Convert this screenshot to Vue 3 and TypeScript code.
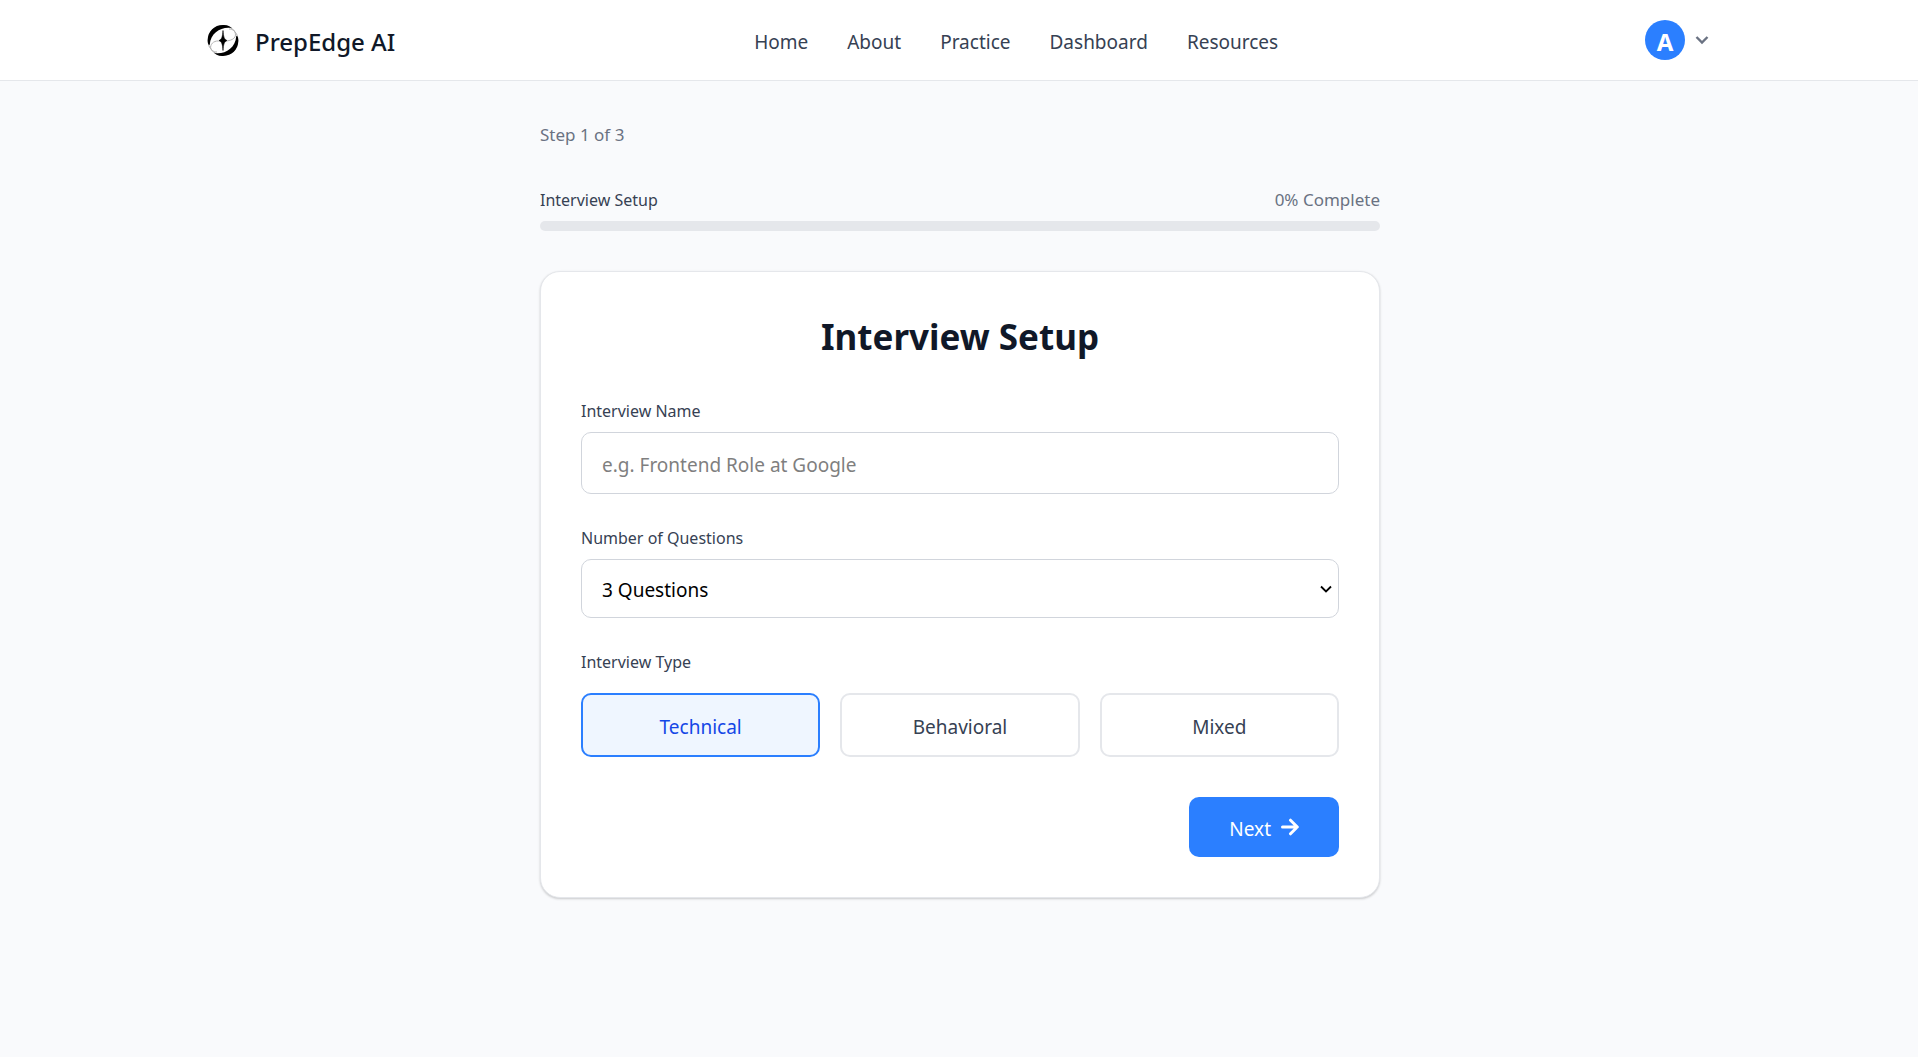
<script setup lang="ts">
import { ref } from 'vue'

const links: string[] = ['Home', 'About', 'Practice', 'Dashboard', 'Resources']
const interviewTypes: string[] = ['Technical', 'Behavioral', 'Mixed']
const questionCounts: number[] = [3, 5, 10]

const progress = ref<number>(0)
const interviewName = ref<string>('')
const questionCount = ref<number>(3)
const selectedType = ref<string>('Technical')
</script>

<template>
  <div class="page">
    <header class="topbar">
      <div class="topbar-inner">
        <a class="brand" href="#">
          <svg class="brand-mark" viewBox="0 -1 32 34" aria-hidden="true">
            <circle cx="16" cy="16.500" r="15" fill="#fff" stroke="#a8a8a8" stroke-width="1" />
            <g transform="translate(0 .5)">
              <path d="M1 19C-1 8 7 0 17 .6c4 .2 6 1.400 8 3C15 1.500 3.500 8 2.800 20c-.6 1-1.400 0-1.800-1Z" fill="#000" />
              <path d="M31 13c2 11-6 19-16 18.400-4-.2-6-1.400-8-3C17 30.500 28.500 24 29.200 12c.6-1 1.400 0 1.800 1Z" fill="#000" />
              <path d="M3.500 23C4 18 8 16 13 16.500c7 .5 15-.5 15.500-6C28.600 7 26 4.500 22 4.500M3.500 22c0 3.500 3 5.500 6.500 5.500" fill="none" stroke="#b5b5b5" stroke-width="1" />
              <path d="M16 6c.4 6 1.200 9 4 10-2.800 1-3.600 4-4 10-.4-6-1.200-9-4-10 2.800-1 3.600-4 4-10Z" fill="#000" stroke="#000" stroke-width=".6" />
            </g>
          </svg>
          <span class="brand-name">PrepEdge AI</span>
        </a>
        <nav class="links" aria-label="Main">
          <a v-for="link in links" :key="link" href="#">{{ link }}</a>
        </nav>
        <button class="account" type="button" aria-label="Account menu">
          <span class="avatar">A</span>
          <svg class="chevron" viewBox="0 0 14 10" aria-hidden="true">
            <path d="M1.500 2 7 7.500 12.500 2" fill="none" stroke="#6a7282" stroke-width="2.400" />
          </svg>
        </button>
      </div>
    </header>

    <main class="content">
      <p class="step">Step 1 of 3</p>
      <div class="progress-head">
        <span class="progress-title">Interview Setup</span>
        <span class="progress-value">{{ progress }}% Complete</span>
      </div>
      <div class="track" role="progressbar" :aria-valuenow="progress" aria-label="Interview Setup">
        <div class="fill" :style="{ width: progress + '%' }"></div>
      </div>

      <form class="card" @submit.prevent>
        <h1>Interview Setup</h1>
        <div class="field">
          <label for="interview-name">Interview Name</label>
          <input id="interview-name" v-model="interviewName" type="text" placeholder="e.g. Frontend Role at Google" />
        </div>
        <div class="field">
          <label for="question-count">Number of Questions</label>
          <div class="select-box">
            <select id="question-count" v-model="questionCount">
              <option v-for="count in questionCounts" :key="count" :value="count">{{ count }} Questions</option>
            </select>
            <svg class="select-arrow" viewBox="0 0 12 8" aria-hidden="true">
              <path d="M1 1.500 6 6.500 11 1.500" fill="none" stroke="#000" stroke-width="1.800" />
            </svg>
          </div>
        </div>
        <div class="field" role="group" aria-labelledby="type-label">
          <span id="type-label" class="group-label">Interview Type</span>
          <div class="types">
            <button
              v-for="type in interviewTypes"
              :key="type"
              type="button"
              class="type"
              :class="{ selected: type === selectedType }"
              :aria-pressed="type === selectedType"
              @click="selectedType = type"
            >
              {{ type }}
            </button>
          </div>
        </div>
        <div class="actions">
          <button class="next" type="submit">
            <span class="next-text">Next</span>
            <svg class="arrow" viewBox="0 0 18 18" aria-hidden="true">
              <path d="M1.500 9H16M9.500 2.200 16.300 9l-6.800 6.800" fill="none" stroke="#fff" stroke-width="3" stroke-linecap="round" stroke-linejoin="round" />
            </svg>
          </button>
        </div>
      </form>
    </main>
  </div>
</template>

<style>
body {
  background: #f9fafc;
}
</style>

<style scoped>
.page,
.page * {
  box-sizing: border-box;
}

.page {
  min-height: 100vh;
  font-family: "Noto Sans", "Open Sans", sans-serif;
  font-size: 19px;
  color: #364153;
  background: #f9fafc;
}

.page button,
.page input,
.page select {
  font: inherit;
}

.topbar {
  background: #fff;
  border-bottom: 1px solid #e5e7eb;
}

.topbar-inner {
  display: flex;
  align-items: center;
  justify-content: space-between;
  height: 80px;
  max-width: 1536px;
  margin: 0 auto;
  padding: 0 18px 0 16px;
}

.brand {
  display: flex;
  align-items: center;
  gap: 16px;
  color: #101828;
  text-decoration: none;
}

.brand-mark {
  width: 32px;
  height: 34px;
}

.brand-name {
  padding-top: 3px;
  font-size: 24px;
  font-weight: 500;
}

.links {
  display: flex;
  gap: 39px;
  padding-top: 3px;
}

.links a {
  color: #364153;
  text-decoration: none;
}

.account {
  display: flex;
  align-items: center;
  gap: 10px;
  padding: 0 0 0 8px;
  border: 0;
  background: none;
}

.avatar {
  width: 40px;
  height: 40px;
  padding-top: 2px;
  border-radius: 50%;
  background: #2b7fff;
  color: #fff;
  font-size: 24px;
  font-weight: 700;
  line-height: 40px;
  text-align: center;
}

.chevron {
  width: 14px;
  height: 10px;
}

.content {
  max-width: 842px;
  margin: 0 auto;
  padding: 40px 0 40px 2px;
}

.step {
  margin: 0 0 38px;
  font-size: 17px;
  line-height: 27px;
  color: #6a7282;
}

.progress-head {
  display: flex;
  align-items: baseline;
  justify-content: space-between;
  margin-bottom: 7px;
  font-size: 16px;
  line-height: 27px;
}

.progress-value {
  font-size: 17px;
  color: #6a7282;
}

.track {
  height: 10px;
  overflow: hidden;
  border-radius: 5px;
  background: #e5e7eb;
}

.fill {
  height: 100%;
  background: #2b7fff;
}

.card {
  margin-top: 40px;
  padding: 40px;
  border: 1px solid #e5e7eb;
  border-radius: 20px;
  background: #fff;
  box-shadow: 0 1px 3px rgba(0, 0, 0, 0.1), 0 1px 2px rgba(0, 0, 0, 0.1);
}

h1 {
  margin: 0 0 35px;
  font-size: 35px;
  font-weight: 700;
  line-height: 50px;
  color: #101828;
  text-align: center;
}

.field {
  margin-bottom: 30px;
}

.field label,
.group-label {
  display: block;
  margin-bottom: 6px;
  font-size: 16px;
  line-height: 29px;
}

.field input,
.field select {
  display: block;
  width: 100%;
  border: 1px solid #d1d5dc;
  border-radius: 10px;
  background: #fff;
  color: #000;
}

.field input {
  height: 62px;
  padding: 3px 20px 0;
}

.field input::placeholder {
  color: #7f7f7f;
}

.select-box {
  display: grid;
  align-items: center;
}

.field select {
  grid-area: 1 / 1;
  height: 59px;
  padding: 2px 28px 0 20px;
  appearance: none;
}

.select-arrow {
  grid-area: 1 / 1;
  justify-self: end;
  width: 12px;
  height: 8px;
  margin-right: 7px;
  pointer-events: none;
}

.types {
  display: grid;
  grid-template-columns: repeat(3, 1fr);
  gap: 20px;
  padding-top: 10px;
}

.type {
  height: 64px;
  padding: 3px 0 0;
  border: 2px solid #e5e7eb;
  border-radius: 10px;
  background: #fff;
  color: #364153;
}

.type.selected {
  border-color: #2b7fff;
  background: #eff6ff;
  color: #1447e6;
}

.actions {
  display: flex;
  justify-content: flex-end;
  padding-top: 10px;
}

.next {
  display: flex;
  align-items: center;
  gap: 10px;
  height: 60px;
  padding: 0 40px;
  border: 0;
  border-radius: 10px;
  background: #2b7fff;
  color: #fff;
}

.next-text {
  padding-top: 3px;
}

.arrow {
  width: 18px;
  height: 18px;
}
</style>
